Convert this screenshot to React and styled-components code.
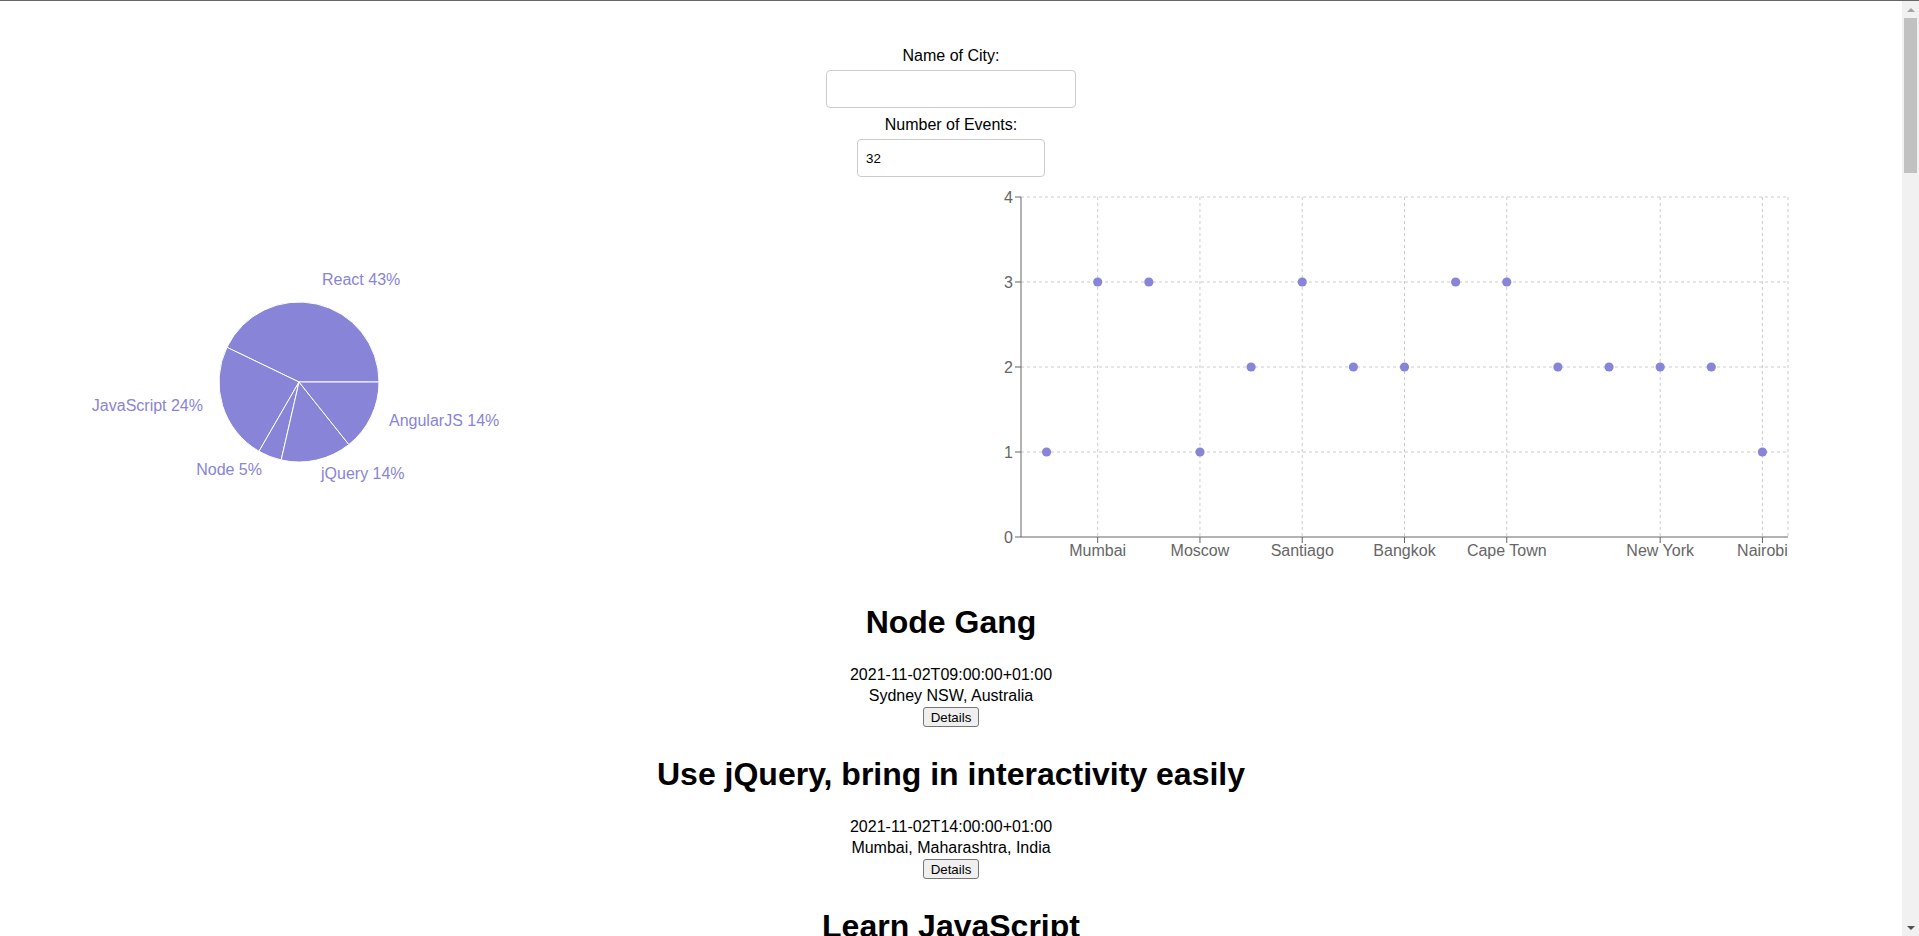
import React from "react";
import styled, { createGlobalStyle } from "styled-components";

const FONT = `"Liberation Sans", Arial, sans-serif`;
const PURPLE = "#8884d8";

const GlobalStyle = createGlobalStyle`
  html, body {
    margin: 0;
    height: 100%;
    overflow: hidden;
  }
  body {
    font-family: ${FONT};
    color: #000;
    background: #fff;
  }
`;

const Frame = styled.div`
  display: flex;
  height: 100vh;
  box-sizing: border-box;
  border-top: 1px solid #666;
`;

const Scroller = styled.div`
  flex: 1;
  min-width: 0;
  overflow-y: auto;
  scrollbar-width: none;

  &::-webkit-scrollbar {
    display: none;
  }
`;

// windows style scroll rail, drawn at its top position
const ScrollRail = styled.div`
  flex: 0 0 17px;
  display: flex;
  flex-direction: column;
  background: #f1f1f1;
`;

const RailButton = styled.div`
  flex: 0 0 17px;
  display: flex;
  align-items: center;
  justify-content: center;
`;

const Arrow = styled.span`
  width: 0;
  height: 0;
  border-left: 4px solid transparent;
  border-right: 4px solid transparent;
  ${(p) =>
    p.$down
      ? `border-top: 4px solid #505050;`
      : `border-bottom: 4px solid #a3a3a3;`}
`;

const RailTrack = styled.div`
  flex: 1;
  padding: 0 2px;
`;

const Thumb = styled.div`
  height: 155px;
  background: #c1c1c1;
`;

const Page = styled.div`
  padding: 8px;
`;

const CitySearch = styled.div`
  display: flex;
  flex-direction: column;
  align-items: center;
  padding-top: 36px;
`;

const Label = styled.label`
  font-size: 16px;
  line-height: 21px;
  margin-top: ${(p) => (p.$first ? 0 : 6)}px;
`;

const TextInput = styled.input`
  box-sizing: border-box;
  width: ${(p) => p.$width}px;
  height: 38px;
  margin-top: 4px;
  padding: 0 8px;
  border: 1px solid #ccc;
  border-radius: 4px;
  background: #fff;
  font-family: ${FONT};
  font-size: 13.33px;
  color: #000;
  outline: none;
`;

const ChartsRow = styled.div`
  display: flex;
  justify-content: space-between;
  align-items: flex-start;
  padding-right: 86px;
  padding-bottom: 3px;
`;

const ChartSvg = styled.svg`
  display: block;
  font-family: ${FONT};
  font-size: 16px;
`;

const TickText = styled.text`
  fill: #666;
`;

const PieLabel = styled.text`
  fill: ${PURPLE};
`;

const EventList = styled.ul`
  list-style: none;
  margin: 0;
  padding: 0;
`;

const EventItem = styled.li`
  text-align: center;
`;

const Title = styled.h1`
  margin: 21px 0;
  font-size: 32px;
  line-height: 42px;
  font-weight: bold;
`;

const Info = styled.p`
  margin: 0;
  font-size: 16px;
  line-height: 21px;
`;

const ButtonRow = styled.div`
  height: 26px;
`;

const DetailsButton = styled.button`
  box-sizing: border-box;
  height: 20px;
  margin-top: 1px;
  padding: 0 7px;
  border: 1px solid #767676;
  border-radius: 3px;
  background: #efefef;
  font-family: ${FONT};
  font-size: 13.33px;
  color: #000;
  vertical-align: top;
  cursor: pointer;
`;

// city, number of events
const CITIES = [
  ["Sydney NSW, Australia", 1],
  ["Mumbai, Maharashtra, India", 3],
  ["London, UK", 3],
  ["Moscow, Russia", 1],
  ["Berlin, Germany", 2],
  ["Santiago, Santiago Metropolitan Region, Chile", 3],
  ["Toronto, ON, Canada", 2],
  ["Bangkok, Thailand", 2],
  ["Dubai - United Arab Emirates", 3],
  ["Cape Town, South Africa", 3],
  ["Tokyo, Japan", 2],
  ["Paris, France", 2],
  ["New York, NY, USA", 2],
  ["Rome, Metropolitan City of Rome, Italy", 2],
  ["Nairobi, Kenya", 1],
];

const TITLES = [
  "Node Gang",
  "Use jQuery, bring in interactivity easily",
  "Learn JavaScript",
  "React is Fun",
  "AngularJS fundamentals",
  "React Hooks in depth",
  "JavaScript for beginners",
  "Building apps with React",
  "jQuery tips and tricks",
  "React Native meetup",
  "Modern JavaScript",
  "AngularJS directives",
  "React state management",
  "Web design basics",
  "JavaScript async patterns",
  "React and GraphQL",
];

const buildEvents = () => {
  const locations = CITIES.map(([city]) => city);
  CITIES.forEach(([city, count]) => {
    for (let i = 1; i < count; i++) locations.push(city);
  });
  return locations.map((location, i) => {
    const day = 2 + Math.floor(i / 2);
    const hour = i % 2 === 0 ? "09" : "14";
    return {
      id: i,
      summary: TITLES[i % TITLES.length],
      start: `2021-11-${String(day).padStart(2, "0")}T${hour}:00:00+01:00`,
      location,
    };
  });
};

const events = buildEvents();

const scatterData = CITIES.map(([city, count]) => ({
  city: city.split(/,| - /)[0].trim(),
  number: count,
}));

const pieData = [
  { name: "React", value: 9 },
  { name: "JavaScript", value: 5 },
  { name: "Node", value: 1 },
  { name: "jQuery", value: 3 },
  { name: "AngularJS", value: 3 },
];

// label spots inside the pie svg (x, y, anchor)
const PIE_LABELS = {
  React: [314, 102, "start"],
  JavaScript: [195, 228, "end"],
  Node: [254, 292, "end"],
  jQuery: [313, 296, "start"],
  AngularJS: [381, 243, "start"],
};

const RAD = Math.PI / 180;
const polar = (cx, cy, r, deg) => [cx + r * Math.cos(deg * RAD), cy - r * Math.sin(deg * RAD)];

function EventGenresChart() {
  const cx = 291;
  const cy = 205;
  const r = 80;
  const total = pieData.reduce((s, d) => s + d.value, 0);
  let angle = 0;

  const slices = pieData.map((d) => {
    const start = angle;
    const sweep = (d.value / total) * 360;
    angle += sweep;
    const [x1, y1] = polar(cx, cy, r, start);
    const [x2, y2] = polar(cx, cy, r, start + sweep);
    const large = sweep > 180 ? 1 : 0;
    return {
      ...d,
      percent: Math.round((d.value / total) * 100),
      path: `M${cx},${cy} L${x1},${y1} A${r},${r} 0 ${large} 0 ${x2},${y2} Z`,
    };
  });

  return (
    <ChartSvg width="582" height="400">
      {slices.map((s) => (
        <path key={s.name} d={s.path} fill={PURPLE} stroke="#fff" strokeWidth="1" />
      ))}
      {slices.map((s) => {
        const [x, y, anchor] = PIE_LABELS[s.name];
        return (
          <PieLabel key={s.name} x={x} y={y} textAnchor={anchor} dominantBaseline="central">
            {`${s.name} ${s.percent}%`}
          </PieLabel>
        );
      })}
    </ChartSvg>
  );
}

function CityEventsChart() {
  const left = 80;
  const top = 20;
  const width = 767;
  const height = 340;
  const right = left + width;
  const bottom = top + height;
  const band = width / scatterData.length;
  const xAt = (i) => left + band * (i + 0.5);
  const yAt = (v) => bottom - (v * height) / 4;
  const shown = [1, 3, 5, 7, 9, 12, 14];

  return (
    <ChartSvg width="867" height="400">
      {[1, 2, 3, 4].map((v) => (
        <line key={v} x1={left} x2={right} y1={yAt(v)} y2={yAt(v)} stroke="#ccc" strokeDasharray="3 3" />
      ))}
      {[...shown.map(xAt), right].map((x) => (
        <line key={x} x1={x} x2={x} y1={top} y2={bottom} stroke="#ccc" strokeDasharray="3 3" />
      ))}

      <line x1={left} x2={left} y1={top} y2={bottom} stroke="#666" />
      {[0, 1, 2, 3, 4].map((v) => (
        <g key={v}>
          <line x1={left - 6} x2={left} y1={yAt(v)} y2={yAt(v)} stroke="#666" />
          <TickText x={left - 8} y={yAt(v)} dy="0.355em" textAnchor="end">
            {v}
          </TickText>
        </g>
      ))}

      <line x1={left} x2={right} y1={bottom} y2={bottom} stroke="#666" />
      {shown.map((i) => (
        <g key={i}>
          <line x1={xAt(i)} x2={xAt(i)} y1={bottom} y2={bottom + 6} stroke="#666" />
          <TickText x={xAt(i)} y={bottom + 8} dy="0.71em" textAnchor="middle">
            {scatterData[i].city}
          </TickText>
        </g>
      ))}

      {scatterData.map((d, i) => (
        <circle key={d.city} cx={xAt(i)} cy={yAt(d.number)} r="4.6" fill={PURPLE} />
      ))}
    </ChartSvg>
  );
}

function Event({ event }) {
  return (
    <EventItem>
      <Title>{event.summary}</Title>
      <Info>{event.start}</Info>
      <Info>{event.location}</Info>
      <ButtonRow>
        <DetailsButton type="button">Details</DetailsButton>
      </ButtonRow>
    </EventItem>
  );
}

export default function App() {
  return (
    <>
      <GlobalStyle />
      <Frame>
        <Scroller>
          <Page>
            <CitySearch>
              <Label $first>Name of City:</Label>
              <TextInput type="text" $width={250} />
              <Label>Number of Events:</Label>
              <TextInput type="number" $width={188} defaultValue="32" />
            </CitySearch>

            <ChartsRow>
              <EventGenresChart />
              <CityEventsChart />
            </ChartsRow>

            <EventList>
              {events.map((e) => (
                <Event key={e.id} event={e} />
              ))}
            </EventList>
          </Page>
        </Scroller>
        <ScrollRail>
          <RailButton>
            <Arrow />
          </RailButton>
          <RailTrack>
            <Thumb />
          </RailTrack>
          <RailButton>
            <Arrow $down />
          </RailButton>
        </ScrollRail>
      </Frame>
    </>
  );
}
